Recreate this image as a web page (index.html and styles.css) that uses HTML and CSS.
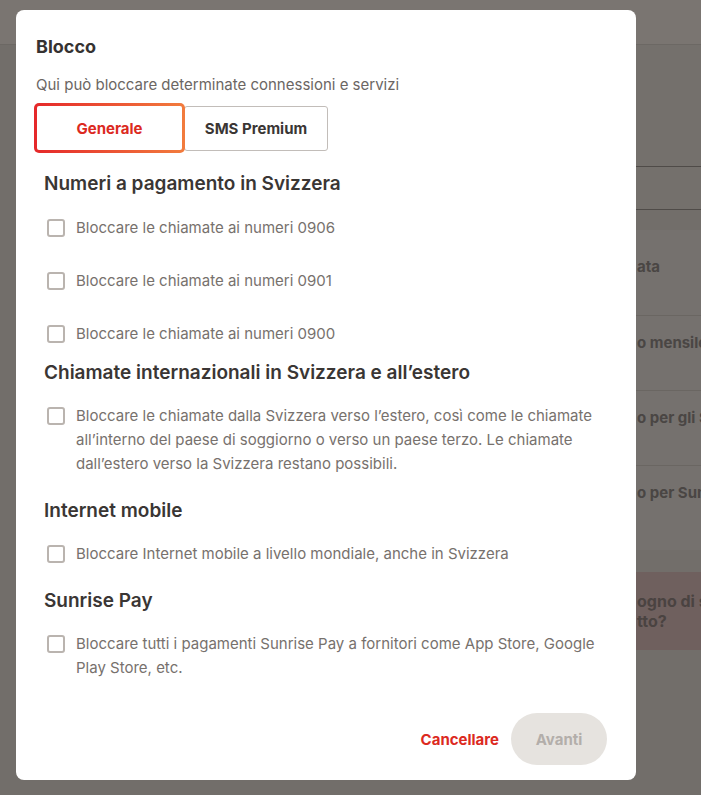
FILE: index.html
```html
<!DOCTYPE html>
<html lang="it">
<head>
<meta charset="utf-8">
<title>Blocco</title>
<link rel="stylesheet" href="styles.css">
</head>
<body>
<div class="page">
  <div class="topbar"></div>
  <div class="content">
    <div class="spacer"></div>
    <div class="tablebar"></div>
    <div class="rows">
      <div class="row first">ata</div>
      <div class="row">o mensile</div>
      <div class="row">o per gli S</div>
      <div class="row last">o per Sun</div>
    </div>
    <div class="help">
      <div class="help-text">ogno di s<br>tto?</div>
    </div>
  </div>
</div>

<div class="modal" role="dialog" aria-labelledby="m-title">
  <h2 class="modal-title" id="m-title">Blocco</h2>
  <p class="modal-sub">Qui può bloccare determinate connessioni e servizi</p>
  <div class="tabs">
    <button class="tab tab-active">Generale</button>
    <button class="tab">SMS Premium</button>
  </div>

  <section class="group group-numbers">
    <h3 class="group-title">Numeri a pagamento in Svizzera</h3>
    <label class="option option-row"><span class="box"></span><span class="label">Bloccare le chiamate ai numeri 0906</span></label>
    <label class="option option-row"><span class="box"></span><span class="label">Bloccare le chiamate ai numeri 0901</span></label>
    <label class="option option-row"><span class="box"></span><span class="label">Bloccare le chiamate ai numeri 0900</span></label>
  </section>

  <section class="group group-intl">
    <h3 class="group-title">Chiamate internazionali in Svizzera e all’estero</h3>
    <label class="option"><span class="box"></span><span class="label">Bloccare le chiamate dalla Svizzera verso l’estero, così come le chiamate all’interno del paese di soggiorno o verso un paese terzo. Le chiamate dall’estero verso la Svizzera restano possibili.</span></label>
  </section>

  <section class="group">
    <h3 class="group-title">Internet mobile</h3>
    <label class="option"><span class="box"></span><span class="label">Bloccare Internet mobile a livello mondiale, anche in Svizzera</span></label>
  </section>

  <section class="group">
    <h3 class="group-title">Sunrise Pay</h3>
    <label class="option"><span class="box"></span><span class="label">Bloccare tutti i pagamenti Sunrise Pay a fornitori come App Store, Google Play Store, etc.</span></label>
  </section>

  <div class="actions">
    <button class="btn-link">Cancellare</button>
    <button class="btn-primary" disabled>Avanti</button>
  </div>
</div>
</body>
</html>
```

FILE: styles.css
```css
* { box-sizing: border-box; }
html, body { margin: 0; padding: 0; }
body {
  width: 701px;
  height: 795px;
  overflow: hidden;
  background: #726e6a;
  font-family: Inter, "Noto Sans", sans-serif;
  position: relative;
}

/* background page (under overlay) */
.page { width: 701px; height: 795px; }
.topbar { height: 45px; background: #7a7571; border-bottom: 1px solid #6c6864; }
.content { margin-left: 330px; }
.spacer { height: 121px; background: #74706c; }
.tablebar { height: 44px; border-top: 1px solid #4f4b48; border-bottom: 1px solid #4f4b48; background: #74706c; }
.rows { margin-top: 20px; background: #75716e; }
.row {
  height: 75px;
  padding: 17px 0 0 307px;
  border-top: 1px solid #6a6662;
  color: #4a4644;
  font-weight: 700;
  font-size: 15px;
  line-height: 20px;
  white-space: nowrap;
  overflow: hidden;
}
.row.first { height: 85px; border-top: none; padding-top: 27px; }
.row.last { height: 85px; }
.help { margin-top: 22px; height: 78px; background: #6f605e; display: flex; align-items: center; padding-left: 307px; overflow: hidden; }
.help-text { color: #4a4341; font-weight: 700; font-size: 16px; line-height: 20px; white-space: nowrap; }

/* modal */
.modal {
  position: absolute;
  left: 16px;
  top: 10px;
  width: 620px;
  height: 770px;
  background: #fff;
  border-radius: 8px;
  padding: 25px 29px 15px 20px;
  display: flex;
  flex-direction: column;
}
.modal-title {
  margin: 0;
  font-size: 18px;
  line-height: 24px;
  font-weight: 700;
  color: #353231;
}
.modal-sub {
  margin: 14px 0 0;
  font-size: 15px;
  line-height: 24px;
  color: #6b6663;
}
.tabs { display: flex; align-items: center; margin-top: 6px; margin-left: -2px; }
.tab {
  font-family: inherit;
  font-size: 15px;
  font-weight: 700;
  color: #3a3634;
  background: #fff;
  border: 1px solid #c2bdb9;
  border-radius: 3px;
  height: 45px;
  width: 144px;
  padding: 0;
  margin-left: -1px;
}
.tab-active {
  width: 151px;
  height: 50px;
  margin-left: 0;
  color: #dc2a1f;
  border: 3px solid transparent;
  border-radius: 5px;
  background:
    linear-gradient(#fff, #fff) padding-box,
    linear-gradient(90deg, #e5282a, #f27c3d) border-box;
  position: relative;
  z-index: 1;
}

.group { padding-left: 8px; margin-top: 22px; }
.group-numbers { margin-top: 18px; }
.group-intl { margin-top: 14px; }
.group-title {
  margin: 0 0 18px;
  font-size: 19px;
  line-height: 26px;
  font-weight: 600;
  color: #3a3634;
}
.group-numbers .group-title { margin-bottom: 19px; }
.option {
  display: flex;
  align-items: flex-start;
  gap: 11px;
  padding-left: 3px;
  font-size: 15px;
  line-height: 24px;
  color: #77716d;
}
.option-row + .option-row { margin-top: 29px; }
.box {
  flex: none;
  width: 18px;
  height: 18px;
  margin-top: 3px;
  border: 2px solid #bab4af;
  border-radius: 3px;
  background: #fff;
}
.label { max-width: 532px; }

.actions {
  margin-top: auto;
  display: flex;
  justify-content: flex-end;
  align-items: center;
  gap: 12px;
}
.btn-link {
  font-family: inherit;
  background: none;
  border: none;
  padding: 0;
  font-size: 15px;
  font-weight: 700;
  color: #dc2a1f;
}
.btn-primary {
  font-family: inherit;
  width: 96px;
  height: 52px;
  border-radius: 26px;
  border: none;
  background: #e6e3df;
  color: #b3aeaa;
  font-size: 15px;
  font-weight: 700;
}
```
